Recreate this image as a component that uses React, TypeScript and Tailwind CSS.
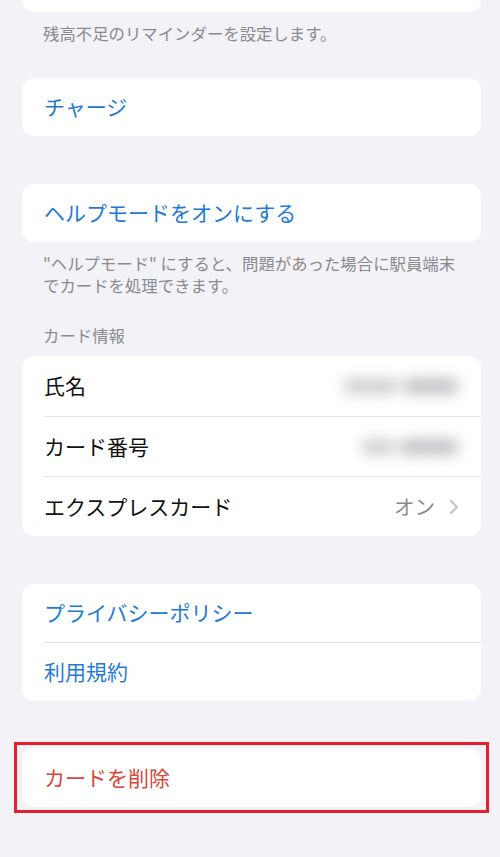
const font = { fontFamily: '"Noto Sans CJK JP", "Noto Sans", sans-serif' };

function Blur({ w1, w2 }: { w1: number; w2: number }) {
  return (
    <div className="flex items-center gap-1 blur-[7px]">
      <div className="h-[16px] rounded-full bg-[#cfcfd2]" style={{ width: w1 }} />
      <div className="h-[16px] rounded-full bg-[#c2c2c5]" style={{ width: w2 }} />
    </div>
  );
}

export default function App() {
  return (
    <div className="w-[500px] h-[857px] overflow-hidden bg-[#f2f2f7]" style={font}>
      {/* previous card, cut off at the top */}
      <div className="ml-[22px] w-[459px] h-[12px] bg-white rounded-b-xl" />
      <p className="ml-[43px] mt-[10px] text-[16.4px] leading-[22px] text-[#8a8a8e]">
        残高不足のリマインダーを設定します。
      </p>

      <div className="ml-[22px] mt-[34px] w-[459px] h-[58px] bg-white rounded-xl flex items-center pl-[22px]">
        <span className="text-[21px] text-[#1f7ad6]">チャージ</span>
      </div>

      <div className="ml-[22px] mt-[48px] w-[459px] h-[58px] bg-white rounded-xl flex items-center pl-[22px]">
        <span className="text-[21px] text-[#1f7ad6]">ヘルプモードをオンにする</span>
      </div>
      <p className="ml-[43px] mt-[10px] w-[450px] text-[16.4px] leading-[22px] text-[#8a8a8e]">
        "ヘルプモード" にすると、問題があった場合に駅員端末
        <br />
        でカードを処理できます。
      </p>

      <p className="ml-[43px] mt-[28px] text-[16.4px] leading-[22px] text-[#8a8a8e]">カード情報</p>

      <div className="ml-[22px] mt-[10px] w-[459px] bg-white rounded-xl">
        <div className="h-[60px] flex items-center justify-between pl-[22px] pr-[22px]">
          <span className="text-[21px] text-[#111]">氏名</span>
          <Blur w1={56} w2={56} />
        </div>
        <div className="ml-[22px] h-px bg-[#e2e2e6]" />
        <div className="h-[59px] flex items-center justify-between pl-[22px] pr-[22px]">
          <span className="text-[21px] text-[#111]">カード番号</span>
          <Blur w1={34} w2={60} />
        </div>
        <div className="ml-[22px] h-px bg-[#e2e2e6]" />
        <div className="h-[59px] flex items-center justify-between pl-[22px] pr-[22px]">
          <span className="text-[21px] text-[#111]">エクスプレスカード</span>
          <div className="flex items-center gap-[14px]">
            <span className="text-[20.5px] text-[#8a8a8e]">オン</span>
            <svg width="10" height="16" viewBox="0 0 10 16" fill="none">
              <path d="M2 2l6 6-6 6" stroke="#c4c4c8" strokeWidth="2.2" strokeLinecap="round" strokeLinejoin="round" />
            </svg>
          </div>
        </div>
      </div>

      <div className="ml-[22px] mt-[48px] w-[459px] bg-white rounded-xl">
        <div className="h-[58px] flex items-center pl-[22px]">
          <span className="text-[21px] text-[#1f7ad6]">プライバシーポリシー</span>
        </div>
        <div className="ml-[22px] h-px bg-[#e2e2e6]" />
        <div className="h-[58px] flex items-center pl-[22px]">
          <span className="text-[21px] text-[#1f7ad6]">利用規約</span>
        </div>
      </div>

      <div className="ml-[14px] mt-[41px] w-[475px] border-[3px] border-[#e3202b] px-[5px] py-[3px]">
        <div className="h-[59px] bg-white rounded-xl flex items-center pl-[22px]">
          <span className="text-[21px] text-[#d9463b]">カードを削除</span>
        </div>
      </div>
    </div>
  );
}
